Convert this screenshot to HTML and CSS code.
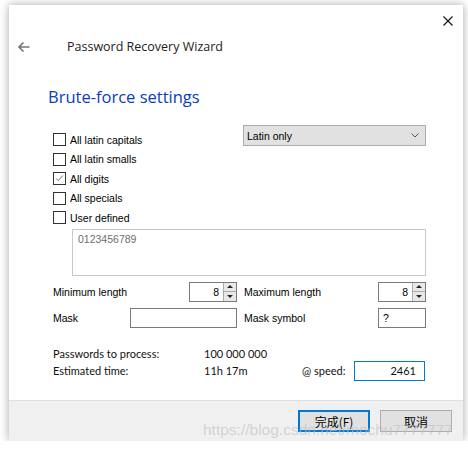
FILE: index.html
```html
<!doctype html>
<html>
	<head>
		<title>Password Recovery Wizard</title>
		<meta charset="utf8">
		<link rel="stylesheet" href="styles.css">
	</head>
	<body>
		<div class="window">
			<div class="titlebar">
				<svg class="close" viewBox="0 0 10 10"><path d="M0.5 0.5 L9.5 9.5 M9.5 0.5 L0.5 9.5"/></svg>
			</div>
			<div class="header">
				<svg class="back" viewBox="0 0 12 10"><path d="M11.5 5 H1 M5.5 0.5 L1 5 L5.5 9.5"/></svg>
				<span class="title">Password Recovery Wizard</span>
			</div>
			<h1 class="heading">Brute-force settings</h1>
			<div class="content">
				<div class="charsets">
					<div class="checks">
						<label class="check"><span class="box"></span>All latin capitals</label>
						<label class="check"><span class="box"></span>All latin smalls</label>
						<label class="check"><span class="box"><svg viewBox="0 0 13 13"><path d="M2.5 6.5 L5 9 L10.5 3"/></svg></span>All digits</label>
						<label class="check"><span class="box"></span>All specials</label>
						<label class="check"><span class="box"></span>User defined</label>
					</div>
					<div class="select">
						<span>Latin only</span>
						<svg class="chevron" viewBox="0 0 8 5"><path d="M0.5 0.5 L4 4 L7.5 0.5"/></svg>
					</div>
				</div>
				<div class="userset">0123456789</div>
				<div class="params">
					<span class="label">Minimum length</span>
					<div class="spin"><span class="num">8</span><span class="arrows"><span class="up"></span><span class="down"></span></span></div>
					<span class="label gap">Maximum length</span>
					<div class="spin"><span class="num">8</span><span class="arrows"><span class="up"></span><span class="down"></span></span></div>
					<span class="label">Mask</span>
					<div class="field mask"></div>
					<span class="label gap">Mask symbol</span>
					<div class="field symbol">?</div>
				</div>
				<div class="summary">
					<span>Passwords to process:</span>
					<span>100 000 000</span>
					<span></span>
					<span></span>
					<span>Estimated time:</span>
					<span>11h 17m</span>
					<span>@ speed:</span>
					<div class="speed">2461</div>
				</div>
			</div>
			<div class="footer">
				<button class="btn primary">完成(F)</button>
				<button class="btn">取消</button>
			</div>
			<div class="watermark">https://blog.csdn.net/mochu7777777</div>
		</div>
	</body>
</html>
```
FILE: styles.css
```css
* {
	margin: 0;
	padding: 0;
	box-sizing: border-box;
}
html,body {
	background-color: #fff;
	font-family: "Open Sans", sans-serif;
	color: #1a1a1a;
}
.window {
	position: relative;
	margin: 5px 0 0 9px;
	width: 454px;
	height: 436px;
	background: #fff;
	box-shadow: 0 0 9px rgba(0,0,0,0.35);
	display: flex;
	flex-direction: column;
}
.titlebar {
	height: 28px;
	display: flex;
	justify-content: flex-end;
	align-items: center;
	padding-right: 10px;
}
.close {
	width: 10px;
	height: 10px;
	margin-top: 3px;
}
.close path {
	stroke: #111;
	stroke-width: 1.1;
	fill: none;
}
.header {
	height: 27px;
	display: flex;
	align-items: center;
	padding-left: 9px;
}
.back {
	width: 12px;
	height: 10px;
}
.back path {
	stroke: #777;
	stroke-width: 1.6;
	fill: none;
}
.title {
	margin-left: 37px;
	font-size: 12.5px;
	color: #222;
}
.heading {
	font-weight: normal;
	font-size: 16.5px;
	color: #0a3dc0;
	margin: 25px 0 0 39px;
	height: 30px;
}
.content {
	padding: 0 37px 0 44px;
	flex-grow: 1;
	font-family: "Liberation Sans", sans-serif;
	font-size: 10.5px;
	color: #000;
}
.charsets {
	display: flex;
	justify-content: space-between;
	margin-top: 10px;
}
.checks {
	display: flex;
	flex-direction: column;
	padding-top: 5px;
}
.check {
	display: flex;
	align-items: center;
	height: 19.5px;
}
.box {
	width: 13px;
	height: 13px;
	border: 1px solid #333;
	background: #fff;
	margin-right: 4px;
	display: flex;
}
.box svg {
	width: 11px;
	height: 11px;
}
.box path {
	stroke: #555;
	stroke-width: 1;
	fill: none;
}
.select {
	width: 183px;
	height: 21px;
	background: #e1e1e1;
	border: 1px solid #adadad;
	display: flex;
	align-items: center;
	justify-content: space-between;
	padding: 0 6px 0 3px;
}
.chevron {
	width: 8px;
	height: 5px;
}
.chevron path {
	stroke: #444;
	stroke-width: 0.9;
	fill: none;
}
.userset {
	margin: 1px 0 0 19px;
	height: 47px;
	border: 1px solid #c8c8c8;
	padding: 3px 5px;
	color: #6d6d6d;
}
.params {
	display: grid;
	grid-template-columns: 76px 108px 141px 48px;
	grid-template-rows: 20px 20px;
	row-gap: 6px;
	align-items: center;
	margin-top: 6px;
	white-space: nowrap;
}
.params .gap {
	padding-left: 7px;
}
.spin {
	justify-self: end;
	width: 48px;
	height: 20px;
	border: 1px solid #7a7a7a;
	display: flex;
	background: #fff;
}
.num {
	flex-grow: 1;
	text-align: right;
	padding-right: 4px;
	line-height: 18px;
}
.arrows {
	width: 13px;
	display: flex;
	flex-direction: column;
	border-left: 1px solid #ababab;
	background: #e8e8e8;
}
.up,.down {
	flex-grow: 1;
	position: relative;
}
.up {
	border-bottom: 1px solid #ababab;
}
.up::after,.down::after {
	content: "";
	position: absolute;
	left: 3px;
	border-left: 3px solid transparent;
	border-right: 3px solid transparent;
}
.up::after {
	top: 2px;
	border-bottom: 3px solid #222;
}
.down::after {
	top: 3px;
	border-top: 3px solid #222;
}
.field {
	height: 20px;
	border: 1px solid #7a7a7a;
	background: #fff;
	padding: 0 4px;
	line-height: 18px;
}
.mask {
	justify-self: end;
	width: 107px;
}
.symbol {
	width: 48px;
}
.summary {
	display: grid;
	grid-template-columns: 151px 98px 52px 71px;
	grid-template-rows: 14px 20px;
	align-items: center;
	margin-top: 19px;
	font-family: Lato, sans-serif;
	font-size: 11px;
	color: #111;
}
.speed {
	height: 20px;
	border: 1px solid #0078d7;
	text-align: right;
	padding-right: 8px;
	line-height: 18px;
}
.footer {
	height: 41px;
	background: #f0f0f0;
	border-top: 1px solid #dfdfdf;
	display: flex;
	justify-content: flex-end;
	align-items: flex-start;
	gap: 10px;
	padding: 9px 11px 0 0;
}
.btn {
	width: 72px;
	height: 22px;
	background: #e1e1e1;
	border: 1px solid #adadad;
	font-family: "Noto Sans CJK SC", sans-serif;
	font-size: 12px;
	color: #000;
}
.btn.primary {
	border: 2px solid #0078d7;
}
.watermark {
	position: absolute;
	left: 194px;
	top: 416px;
	font-family: "Liberation Sans", sans-serif;
	font-size: 15.5px;
	color: rgba(190,190,190,0.6);
	pointer-events: none;
}
```
